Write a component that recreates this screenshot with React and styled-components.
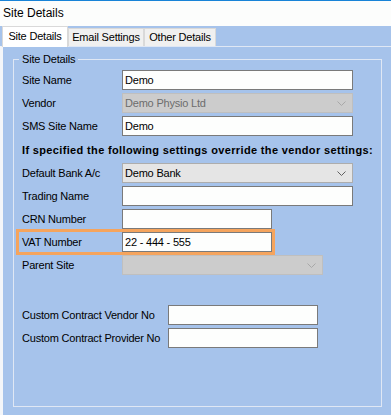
import React from "react";
import styled, { createGlobalStyle } from "styled-components";

const COLORS = {
  form: "#a6c3eb",
  line: "#dfe7f4",
  tabBorder: "#d9d9d9",
  tabIdle: "#f0f0f0",
  inputBorder: "#7a7a7a",
  comboBg: "#e5e5e5",
  comboBorder: "#adadad",
  disabledBg: "#cccccc",
  disabledBorder: "#bfbfbf",
  highlight: "#f5a45d",
};

const GlobalStyle = createGlobalStyle`
  html, body {
    margin: 0;
    padding: 0;
    background: ${COLORS.form};
  }
  body {
    font-family: "Liberation Sans", Arial, sans-serif;
    font-size: 11px;
    letter-spacing: -0.2px;
    color: #000;
  }
`;

const Chevron = ({ disabled }) => (
  <ChevronWrapper>
    <svg width="9" height="5" viewBox="0 0 9 5">
      <polyline
        points="0.5,0.5 4.5,4.5 8.5,0.5"
        fill="none"
        stroke={disabled ? "#a8a8a8" : "#606060"}
        strokeWidth="1"
      />
    </svg>
  </ChevronWrapper>
);

const Field = ({ label, labelWidth = 100, children, highlight }) => (
  <Row $highlight={highlight}>
    <Label style={{ "--w": labelWidth + "px" }}>{label}</Label>
    {children}
  </Row>
);

const App = () => {
  return (
    <>
      <GlobalStyle />
      <Window>
        <TitleBar>Site Details</TitleBar>
        <TabStrip>
          <Tab $active $w={66}>Site Details</Tab>
          <Tab $w={76}>Email Settings</Tab>
          <Tab $w={72}>Other Details</Tab>
        </TabStrip>
        <TabPage>
          <GroupBox>
            <Legend>Site Details</Legend>
            <Rows>
              <Field label="Site Name">
                <TextBox $w={231} defaultValue="Demo" />
              </Field>
              <Field label="Vendor">
                <Combo $w={231} $disabled>
                  Demo Physio Ltd
                  <Chevron disabled />
                </Combo>
              </Field>
              <Field label="SMS Site Name">
                <TextBox $w={231} defaultValue="Demo" />
              </Field>
              <Heading>
                If specified the following settings override the vendor
                settings:
              </Heading>
              <Field label="Default Bank A/c">
                <Combo $w={231}>
                  Demo Bank
                  <Chevron />
                </Combo>
              </Field>
              <Field label="Trading Name">
                <TextBox $w={231} defaultValue="" />
              </Field>
              <Field label="CRN Number">
                <TextBox $w={150} defaultValue="" />
              </Field>
              <Field label="VAT Number" highlight>
                <TextBox $w={150} defaultValue="22 - 444 - 555" />
              </Field>
              <Field label="Parent Site">
                <Combo $w={201} $disabled>
                  <Chevron disabled />
                </Combo>
              </Field>
              <Spacer />
              <Field label="Custom Contract Vendor No" labelWidth={146}>
                <TextBox $w={150} defaultValue="" />
              </Field>
              <Field label="Custom Contract Provider No" labelWidth={146}>
                <TextBox $w={150} defaultValue="" />
              </Field>
            </Rows>
          </GroupBox>
        </TabPage>
      </Window>
    </>
  );
};

const Window = styled.div`
  display: flex;
  flex-direction: column;
  width: 391px;
  height: 415px;
  overflow: hidden;
  background: ${COLORS.form};
`;

const TitleBar = styled.div`
  height: 25px;
  border-top: 1px solid #1883d7;
  background: #fcfdfc;
  padding-left: 3px;
  font-size: 12px;
  letter-spacing: 0;
  line-height: 25px;
`;

const TabStrip = styled.div`
  display: flex;
  align-items: flex-end;
  height: 20px;
  padding-left: 2px;
`;

const Tab = styled.div`
  position: relative;
  box-sizing: border-box;
  width: ${(p) => p.$w}px;
  height: ${(p) => (p.$active ? 21 : 18)}px;
  margin-bottom: ${(p) => (p.$active ? -1 : 0)}px;
  z-index: ${(p) => (p.$active ? 1 : 0)};
  background: ${(p) => (p.$active ? "#ffffff" : COLORS.tabIdle)};
  border: 1px solid ${COLORS.tabBorder};
  border-bottom: none;
  text-align: center;
  line-height: ${(p) => (p.$active ? 19 : 17)}px;
  white-space: nowrap;
`;

const TabPage = styled.div`
  flex: 1;
  border-top: 1px solid ${COLORS.line};
  border-left: 3px solid #f4f6f9;
  padding: 6px 9px 0 10px;
`;

const GroupBox = styled.fieldset`
  margin: 0;
  height: 354px;
  box-sizing: border-box;
  border: 1px solid ${COLORS.line};
  padding: 4px 8px 0 8px;
  min-width: 0;
`;

const Legend = styled.legend`
  margin-left: -3px;
  padding: 0 3px;
  line-height: 13px;
`;

const Rows = styled.div`
  display: flex;
  flex-direction: column;
  gap: 3px;
`;

const Row = styled.div`
  display: flex;
  align-items: center;
  width: max-content;
  margin-left: ${(p) => (p.$highlight ? -3 : 0)}px;
  padding-left: ${(p) => (p.$highlight ? 3 : 0)}px;
  outline: ${(p) => (p.$highlight ? `3px solid ${COLORS.highlight}` : "none")};
`;

const Label = styled.div`
  width: var(--w);
  flex-shrink: 0;
  white-space: nowrap;
`;

const TextBox = styled.input`
  box-sizing: border-box;
  width: ${(p) => p.$w}px;
  height: 20px;
  margin: 0;
  padding: 0 2px;
  border: 1px solid ${COLORS.inputBorder};
  background: #fdfefd;
  font: inherit;
  letter-spacing: inherit;
  color: #000;
  outline: none;
`;

const Combo = styled.div`
  position: relative;
  box-sizing: border-box;
  width: ${(p) => p.$w}px;
  height: 20px;
  padding-left: 2px;
  border: 1px solid
    ${(p) => (p.$disabled ? COLORS.disabledBorder : COLORS.comboBorder)};
  background: ${(p) => (p.$disabled ? COLORS.disabledBg : COLORS.comboBg)};
  color: ${(p) => (p.$disabled ? "#6d6d6d" : "#000")};
  line-height: 18px;
  white-space: nowrap;
`;

const ChevronWrapper = styled.span`
  position: absolute;
  top: 0;
  bottom: 0;
  right: 6px;
  display: flex;
  align-items: center;
`;

const Heading = styled.div`
  display: flex;
  align-items: center;
  height: 21px;
  font-weight: bold;
  letter-spacing: 0.35px;
  white-space: nowrap;
`;

const Spacer = styled.div`
  height: 24px;
`;

export default App;
